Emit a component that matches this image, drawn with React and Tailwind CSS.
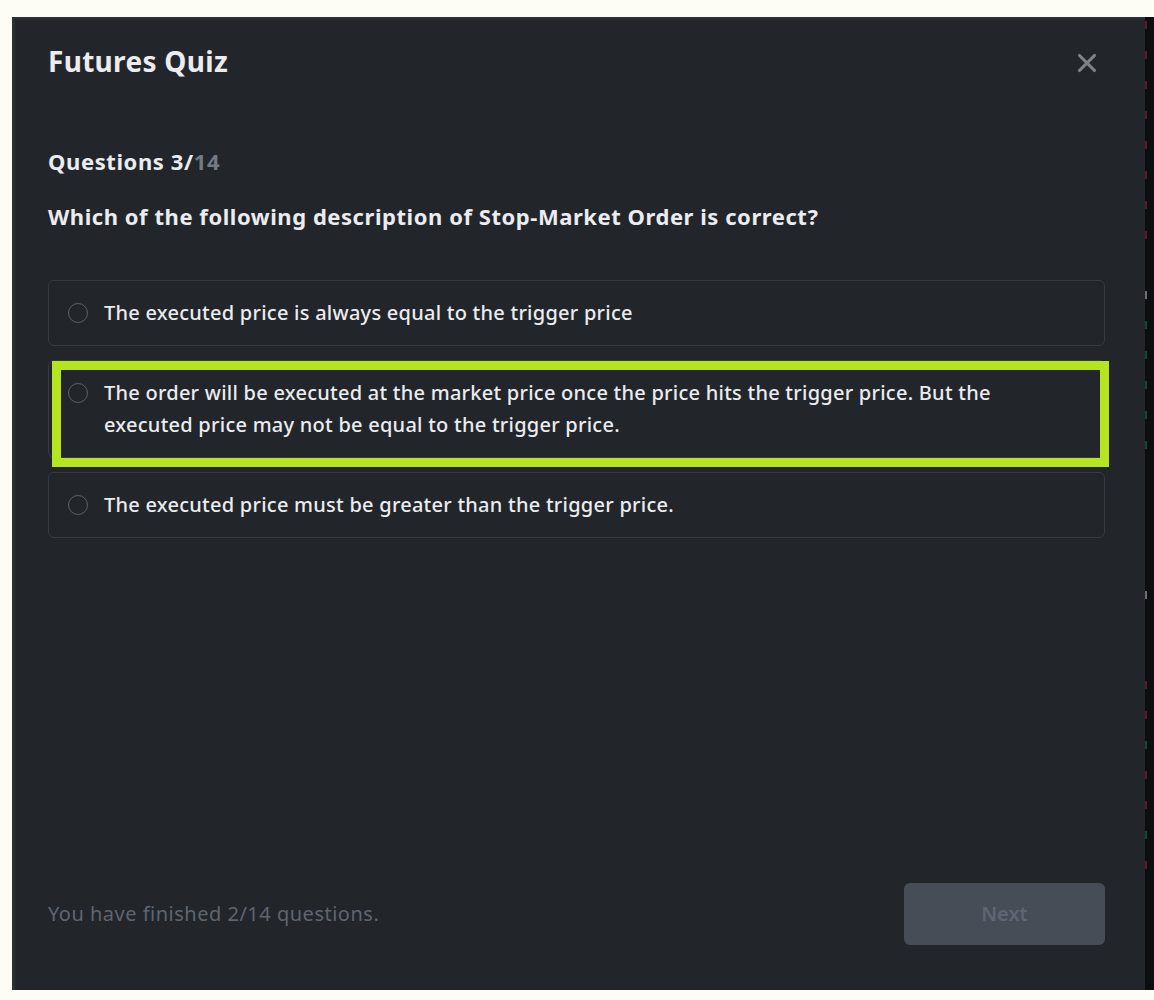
import React from 'react';
import { X } from 'lucide-react';

const options = [
  'The executed price is always equal to the trigger price',
  'The order will be executed at the market price once the price hits the trigger price. But the executed price may not be equal to the trigger price.',
  'The executed price must be greater than the trigger price.'
];

// ticks of the chart peeking out behind the modal
const ticks = [
  'red', 'red', 'red', 'red', 'red', 'red', 'red', 'red', 'none', 'grey',
  'green', 'green', 'green', 'green', 'green', 'none', 'none', 'none', 'none', 'grey',
  'none', 'none', 'red', 'red', 'green', 'red', 'red', 'green', 'red', 'none'
];

const tickColor = {
  red: 'bg-[#5a1a22]',
  green: 'bg-[#0f4a34]',
  grey: 'bg-[#6b6f76]',
  none: 'bg-transparent'
};

const Option = ({ text, highlighted }) => (
  <div className="relative flex items-start gap-4 rounded-md border border-[#363b42] px-[19px] py-4">
    <span className="mt-[6px] h-5 w-5 shrink-0 rounded-full border-[1.5px] border-[#5a606a]" />
    <p className="max-w-[900px] text-[20px] font-medium leading-8 tracking-[0.25px] text-[#eaecef]">{text}</p>
    {highlighted && (
      <div className="pointer-events-none absolute left-[3px] top-0 h-[106px] w-[1057px] border-[9px] border-[#b4e51f]" />
    )}
  </div>
);

const App = () => {
  return (
    <div
      className="flex h-[1000px] w-full bg-[#fdfdf6] pl-3 pt-[17px]"
      style={{ fontFamily: '"Noto Sans", "Open Sans", sans-serif' }}
    >
      {/* Modal */}
      <div className="flex h-[973px] w-[1133px] flex-col border-l-[3px] border-t-2 border-[#2c3036] bg-[#22262a] pb-[45px] pl-[33px] pr-10 pt-6">
        <div className="flex items-center justify-between">
          <h1 className="text-[28px] font-bold leading-9 tracking-[0.3px] text-[#eaecef]">Futures Quiz</h1>
          <X size={30} strokeWidth={2.5} className="mr-[3px] mt-1 text-[#7d828b]" />
        </div>

        <p className="mt-[68px] text-[22px] font-bold leading-7 tracking-[0.6px] text-[#eaecef]">
          Questions 3/<span className="text-[#737a85]">14</span>
        </p>
        <p className="mt-[26px] text-[22px] font-bold leading-[30px] tracking-[0.55px] text-[#eaecef]">
          Which of the following description of Stop-Market Order is correct?
        </p>

        <div className="mt-[49px] flex flex-col gap-[14px]">
          {options.map((opt, i) => (
            <Option key={i} text={opt} highlighted={i === 1} />
          ))}
        </div>

        {/* Footer */}
        <div className="mt-auto flex items-center justify-between">
          <p className="text-[20px] leading-7 tracking-[0.5px] text-[#5e6570]">You have finished 2/14 questions.</p>
          <button className="h-[62px] w-[201px] rounded-md bg-[#474d57] text-[20px] font-semibold text-[#5e6673]">
            Next
          </button>
        </div>
      </div>

      {/* Chart edge */}
      <div className="flex h-[973px] w-[9px] flex-col bg-[#0c0e11] pt-1">
        {ticks.map((t, i) => (
          <div key={i} className="flex h-[30px] items-start">
            <span className={`h-[8px] w-[2px] ${tickColor[t]}`} />
          </div>
        ))}
      </div>
    </div>
  );
};

export default App;
